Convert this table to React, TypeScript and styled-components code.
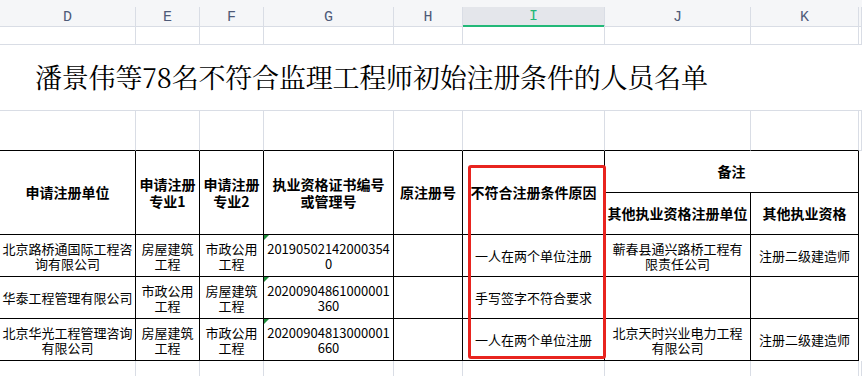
import styled, { createGlobalStyle } from 'styled-components'

const COLS = '136px 64px 64px 130px 69px 142px 146px 108px 3px'
const GRID = '#d9dde5'
const CJK = '"Noto Sans CJK SC", "Noto Sans", sans-serif'

type Person = {
  unit: string[]
  major1: string[]
  major2: string[]
  cert: string[]
  reason: string
  otherUnit: string[]
  otherQual: string
}

const people: Person[] = [
  {
    unit: ['北京路桥通国际工程咨', '询有限公司'],
    major1: ['房屋建筑', '工程'],
    major2: ['市政公用', '工程'],
    cert: ['20190502142000354', '0'],
    reason: '一人在两个单位注册',
    otherUnit: ['蕲春县通兴路桥工程有', '限责任公司'],
    otherQual: '注册二级建造师',
  },
  {
    unit: ['华泰工程管理有限公司'],
    major1: ['市政公用', '工程'],
    major2: ['房屋建筑', '工程'],
    cert: ['20200904861000001', '360'],
    reason: '手写签字不符合要求',
    otherUnit: [],
    otherQual: '',
  },
  {
    unit: ['北京华光工程管理咨询', '有限公司'],
    major1: ['房屋建筑', '工程'],
    major2: ['市政公用', '工程'],
    cert: ['20200904813000001', '660'],
    reason: '一人在两个单位注册',
    otherUnit: ['北京天时兴业电力工程', '有限公司'],
    otherQual: '注册二级建造师',
  },
]

const letters = ['D', 'E', 'F', 'G', 'H', 'I', 'J', 'K']

const Global = createGlobalStyle`
  * { box-sizing: border-box; }
  html, body { margin: 0; padding: 0; background: #fff; }
  body { font-family: ${CJK}; color: #000; }
`

const Sheet = styled.div`
  position: relative; width: 862px; height: 376px; overflow: hidden; background: #fff;
`
const TopBand = styled.div`height: 7px; background: #f5f6f8;`
const Row = styled.div<{ $h: number }>`
  display: grid; grid-template-columns: ${COLS}; height: ${p => p.$h}px;
`
const ColHead = styled.div<{ $sel?: boolean }>`
  display: flex; align-items: center; justify-content: center;
  background: ${p => (p.$sel ? '#e4e6eb' : '#f5f6f8')};
  border-right: 1px solid ${GRID};
  border-bottom: ${p => (p.$sel ? '2px solid #22b878' : `1px solid ${GRID}`)};
  font: 15px "Liberation Mono", monospace;
  color: ${p => (p.$sel ? '#22b878' : '#4e5a78')};
  padding-top: 1px;
`
const Blank = styled.div<{ $edge?: boolean; $open?: boolean }>`
  border-right: 1px solid ${GRID};
  border-bottom: ${p => (p.$open ? 'none' : `1px solid ${p.$edge ? '#000' : GRID}`)};
`
const TitleRow = styled.div`
  height: 66px; display: flex; align-items: center; padding: 0 0 2px 35px;
  border-bottom: 1px solid ${GRID};
`
const Title = styled.h1`
  margin: 0; font: 400 27px "Noto Serif CJK SC", "Noto Sans CJK SC", serif;
  color: #000; letter-spacing: -0.2px;
`
const Table = styled.div`
  display: grid; grid-template-columns: ${COLS}; grid-template-rows: repeat(5, 42px);
`
const Cell = styled.div<{ $row?: string; $col?: string; $head?: boolean; $mark?: boolean }>`
  position: relative;
  grid-row: ${p => p.$row ?? 'auto'};
  grid-column: ${p => p.$col ?? 'auto'};
  display: flex; flex-direction: column; align-items: center; justify-content: center;
  text-align: center; white-space: nowrap;
  border-right: 1px solid #000; border-bottom: 1px solid #000;
  font-size: ${p => (p.$head ? '14px' : '13px')};
  font-weight: ${p => (p.$head ? 700 : 400)};
  line-height: ${p => (p.$head ? '17px' : '15px')};
  color: #000;
  &::before {
    content: '';
    display: ${p => (p.$mark ? 'block' : 'none')};
    position: absolute; left: 0; top: 0;
    border-top: 5px solid #1e8c3a; border-right: 5px solid transparent;
  }
`
const Filler = styled.div`grid-column: 9; grid-row: 1 / 6;`
const Line = styled.span`display: block;`
const Highlight = styled.div`
  position: absolute; left: 468px; top: 165px; width: 138px; height: 194px;
  border: 3px solid #e8241f; border-radius: 3px; pointer-events: none;
`

const Lines = ({ items }: { items: string[] }) => (
  <>{items.map((t, i) => <Line key={i}>{t}</Line>)}</>
)

const GridRow = ({ h, edge, open }: { h: number; edge?: boolean; open?: boolean }) => (
  <Row $h={h}>
    {letters.map(l => <Blank key={l} $edge={edge} $open={open} />)}
    <Blank $open={open} />
  </Row>
)

export default function App() {
  return (
    <Sheet>
      <Global />
      <TopBand />
      <Row $h={19}>
        {letters.map(l => (
          <ColHead key={l} $sel={l === 'I'}>{l}</ColHead>
        ))}
        <ColHead />
      </Row>
      <GridRow h={19} />
      <TitleRow>
        <Title>潘景伟等78名不符合监理工程师初始注册条件的人员名单</Title>
      </TitleRow>
      <GridRow h={40} edge />
      <Table>
        <Cell $head $row="1 / 3" $col="1">申请注册单位</Cell>
        <Cell $head $row="1 / 3" $col="2"><Lines items={['申请注册', '专业1']} /></Cell>
        <Cell $head $row="1 / 3" $col="3"><Lines items={['申请注册', '专业2']} /></Cell>
        <Cell $head $row="1 / 3" $col="4"><Lines items={['执业资格证书编号', '或管理号']} /></Cell>
        <Cell $head $row="1 / 3" $col="5">原注册号</Cell>
        <Cell $head $row="1 / 3" $col="6">不符合注册条件原因</Cell>
        <Cell $head $row="1" $col="7 / 9">备注</Cell>
        <Cell $head $row="2" $col="7">其他执业资格注册单位</Cell>
        <Cell $head $row="2" $col="8">其他执业资格</Cell>
        <Filler />
        {people.map((p, i) => {
          const r = String(i + 3)
          return [
            <Cell key={`a${i}`} $row={r} $col="1"><Lines items={p.unit} /></Cell>,
            <Cell key={`b${i}`} $row={r} $col="2"><Lines items={p.major1} /></Cell>,
            <Cell key={`c${i}`} $row={r} $col="3"><Lines items={p.major2} /></Cell>,
            <Cell key={`d${i}`} $row={r} $col="4" $mark><Lines items={p.cert} /></Cell>,
            <Cell key={`e${i}`} $row={r} $col="5" />,
            <Cell key={`f${i}`} $row={r} $col="6">{p.reason}</Cell>,
            <Cell key={`g${i}`} $row={r} $col="7"><Lines items={p.otherUnit} /></Cell>,
            <Cell key={`h${i}`} $row={r} $col="8">{p.otherQual}</Cell>,
          ]
        })}
      </Table>
      <GridRow h={16} open />
      <Highlight />
    </Sheet>
  )
}
